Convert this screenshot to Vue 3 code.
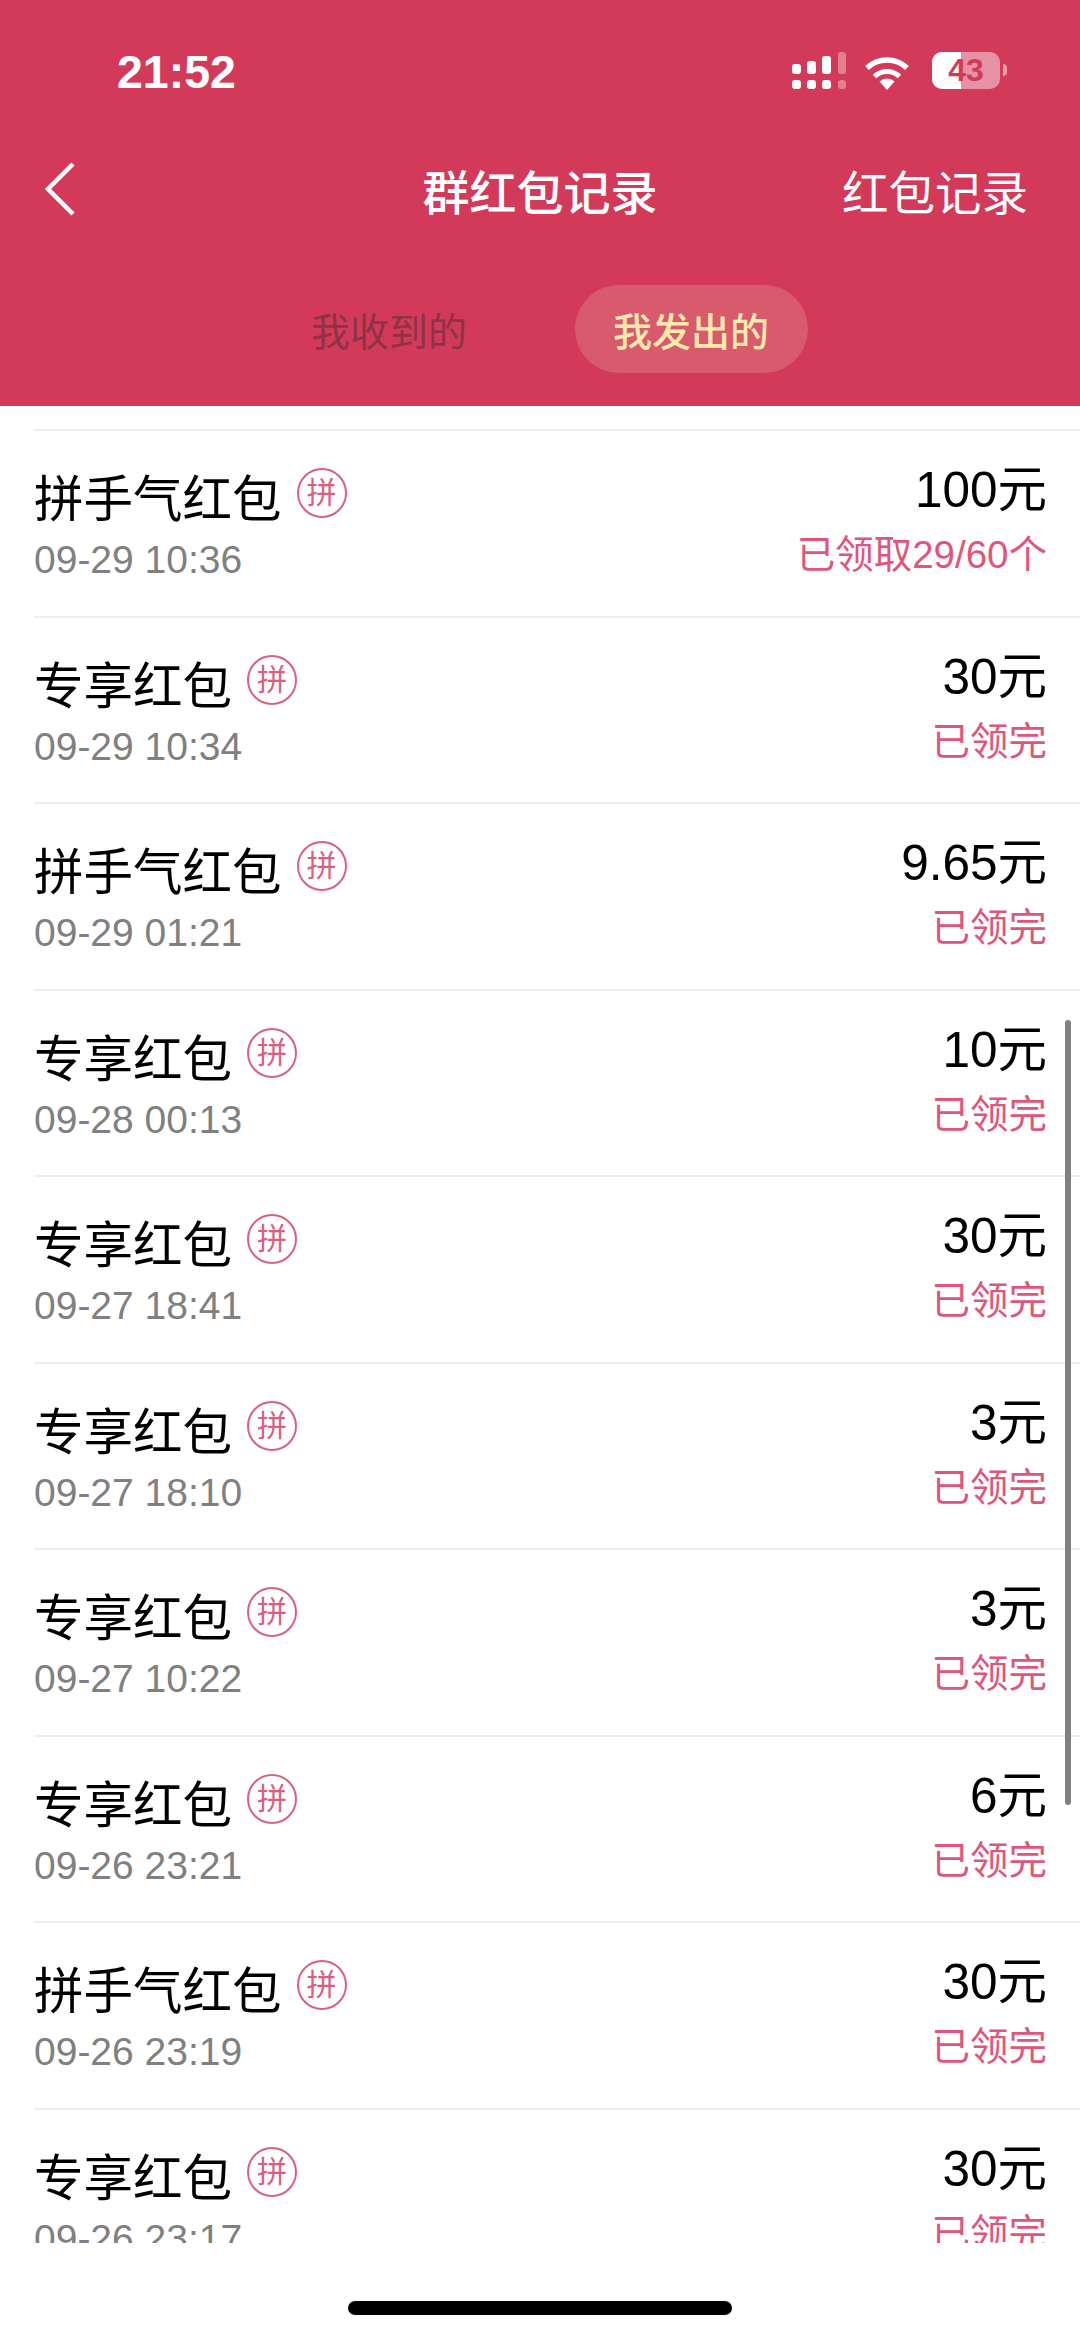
<template>
  <div class="page">
    <header class="top">
      <div class="status">
        <span class="clock">21:52</span>
        <div class="status-icons">
          <svg class="signal" width="54" height="38" viewBox="0 0 54 38">
            <g fill="#fff">
              <rect x="0" y="12" width="9" height="10" rx="3" />
              <rect x="15" y="9" width="9" height="13" rx="3" />
              <rect x="30" y="4" width="9" height="18" rx="3" />
              <rect x="0" y="28" width="9" height="9" rx="3" />
              <rect x="15" y="28" width="9" height="9" rx="3" />
              <rect x="30" y="28" width="9" height="9" rx="3" />
            </g>
            <g fill="#fff" opacity="0.35">
              <rect x="46" y="0" width="8" height="22" rx="3" />
              <rect x="46" y="28" width="8" height="9" rx="3" />
            </g>
          </svg>
          <svg class="wifi" width="46" height="34" viewBox="0 0 46 34">
            <path d="M23 34l-7.500-8.500a11 11 0 0 1 15 0z" fill="#fff" />
            <path d="M10.500 20.500a18 18 0 0 1 25 0" fill="none" stroke="#fff" stroke-width="5" />
            <path d="M3 12a29 29 0 0 1 40 0" fill="none" stroke="#fff" stroke-width="5.500" />
          </svg>
          <div class="battery">
            <span class="battery-fill"></span>
            <span class="battery-num">43</span>
          </div>
          <span class="battery-nub"></span>
        </div>
      </div>

      <div class="nav">
        <svg class="back" width="36" height="56" viewBox="0 0 36 56">
          <path d="M31 3L6 28l25 25" fill="none" stroke="#fff" stroke-width="4.500" />
        </svg>
        <h1 class="title">群红包记录</h1>
        <span class="nav-link">红包记录</span>
      </div>

      <div class="tabs">
        <span class="tab">我收到的</span>
        <span class="tab active">我发出的</span>
      </div>
    </header>

    <section class="list">
      <div v-for="(item, idx) in records" :key="idx" class="row">
        <div class="row-left">
          <div class="name">
            <span>{{ item.name }}</span>
            <i class="badge">拼</i>
          </div>
          <div class="time">{{ item.time }}</div>
        </div>
        <div class="row-right">
          <div class="amount">{{ item.amount }}元</div>
          <div class="state">{{ item.state || '已领完' }}</div>
        </div>
      </div>
      <span class="scrollbar"></span>
    </section>

    <footer class="bottom">
      <span class="home-bar"></span>
    </footer>
  </div>
</template>

<script setup>
const lucky = '拼手气红包'
const vip = '专享红包'

const records = [
  { name: lucky, time: '09-29 10:36', amount: '100', state: '已领取29/60个' },
  { name: vip, time: '09-29 10:34', amount: '30' },
  { name: lucky, time: '09-29 01:21', amount: '9.65' },
  { name: vip, time: '09-28 00:13', amount: '10' },
  { name: vip, time: '09-27 18:41', amount: '30' },
  { name: vip, time: '09-27 18:10', amount: '3' },
  { name: vip, time: '09-27 10:22', amount: '3' },
  { name: vip, time: '09-26 23:21', amount: '6' },
  { name: lucky, time: '09-26 23:19', amount: '30' },
  { name: vip, time: '09-26 23:17', amount: '30' }
]
</script>

<style>
html,
body {
  background: #fff;
}
</style>

<style scoped>
.page {
  width: 1080px;
  height: 2337px;
  display: flex;
  flex-direction: column;
  overflow: hidden;
  background: #fff;
  font-family: "Liberation Sans", "Noto Sans CJK SC", sans-serif;
}

.top {
  height: 406px;
  flex: none;
  background: #d33a5a;
  color: #fff;
}

.status {
  height: 149px;
  padding: 52px 73px 0 117px;
  box-sizing: border-box;
  display: flex;
  justify-content: space-between;
}

.clock {
  font-size: 46.500px;
  line-height: 40px;
  font-weight: 700;
}

.status-icons {
  display: flex;
  align-items: flex-start;
}

.wifi {
  margin: 4px 0 0 18px;
}

.battery {
  position: relative;
  width: 68px;
  height: 37px;
  margin-left: 22px;
  border-radius: 10px;
  overflow: hidden;
  background: rgba(255, 255, 255, 0.45);
  display: flex;
  align-items: center;
  justify-content: center;
}

.battery-fill {
  position: absolute;
  left: 0;
  top: 0;
  bottom: 0;
  width: 29px;
  background: #fff;
}

.battery-num {
  position: relative;
  font-size: 32px;
  font-weight: 700;
  color: #d33a5a;
}

.battery-nub {
  width: 4px;
  height: 12px;
  margin: 12px 0 0 3px;
  border-radius: 0 4px 4px 0;
  background: rgba(255, 255, 255, 0.5);
}

.nav {
  position: relative;
  height: 80px;
  padding: 0 52px 0 42px;
  display: flex;
  align-items: center;
  justify-content: space-between;
}

.title {
  position: absolute;
  left: 0;
  right: 0;
  margin: 0;
  text-align: center;
  font-size: 47px;
  font-weight: 500;
  pointer-events: none;
}

.nav-link {
  font-size: 46.500px;
  font-weight: 400;
}

.tabs {
  margin-top: 56px;
  display: flex;
  justify-content: center;
  gap: 69px;
}

.tab {
  width: 233px;
  height: 88px;
  border-radius: 44px;
  display: flex;
  align-items: center;
  justify-content: center;
  font-size: 39px;
  font-weight: 400;
  color: #8e3245;
}

.tab.active {
  background: #d85a6d;
  color: #ffe9ad;
  font-weight: 500;
}

.list {
  position: relative;
  height: 1837px;
  flex: none;
  padding: 23px 0 0 34px;
  box-sizing: border-box;
  overflow: hidden;
}

.row {
  height: 186.500px;
  flex: none;
  box-sizing: border-box;
  border-top: 2px solid #eeeeee;
  padding: 40px 33px 0 0;
  display: flex;
  justify-content: space-between;
}

.name {
  display: flex;
  align-items: flex-start;
  height: 58px;
  font-size: 49.500px;
  line-height: 58px;
  color: #000;
}

.badge {
  width: 50px;
  height: 50px;
  margin: -3px 0 0 15px;
  box-sizing: border-box;
  border: 2.500px solid #d9607f;
  border-radius: 50%;
  display: flex;
  align-items: center;
  justify-content: center;
  font-style: normal;
  font-size: 30px;
  line-height: 1;
  color: #d9607f;
}

.time {
  margin-top: 9px;
  font-size: 39px;
  line-height: 44px;
  color: #808080;
}

.row-right {
  text-align: right;
}

.amount {
  height: 58px;
  margin-top: -10px;
  font-size: 49.500px;
  line-height: 58px;
  color: #000;
}

.state {
  margin-top: 14px;
  font-size: 38.500px;
  line-height: 44px;
  color: #e0557a;
}

.scrollbar {
  position: absolute;
  right: 9px;
  top: 614px;
  width: 6px;
  height: 785px;
  border-radius: 3px;
  background: #808080;
}

.bottom {
  flex: 1;
  display: flex;
  justify-content: center;
  padding-top: 58px;
}

.home-bar {
  width: 384px;
  height: 14px;
  border-radius: 7px;
  background: #000;
}
</style>
